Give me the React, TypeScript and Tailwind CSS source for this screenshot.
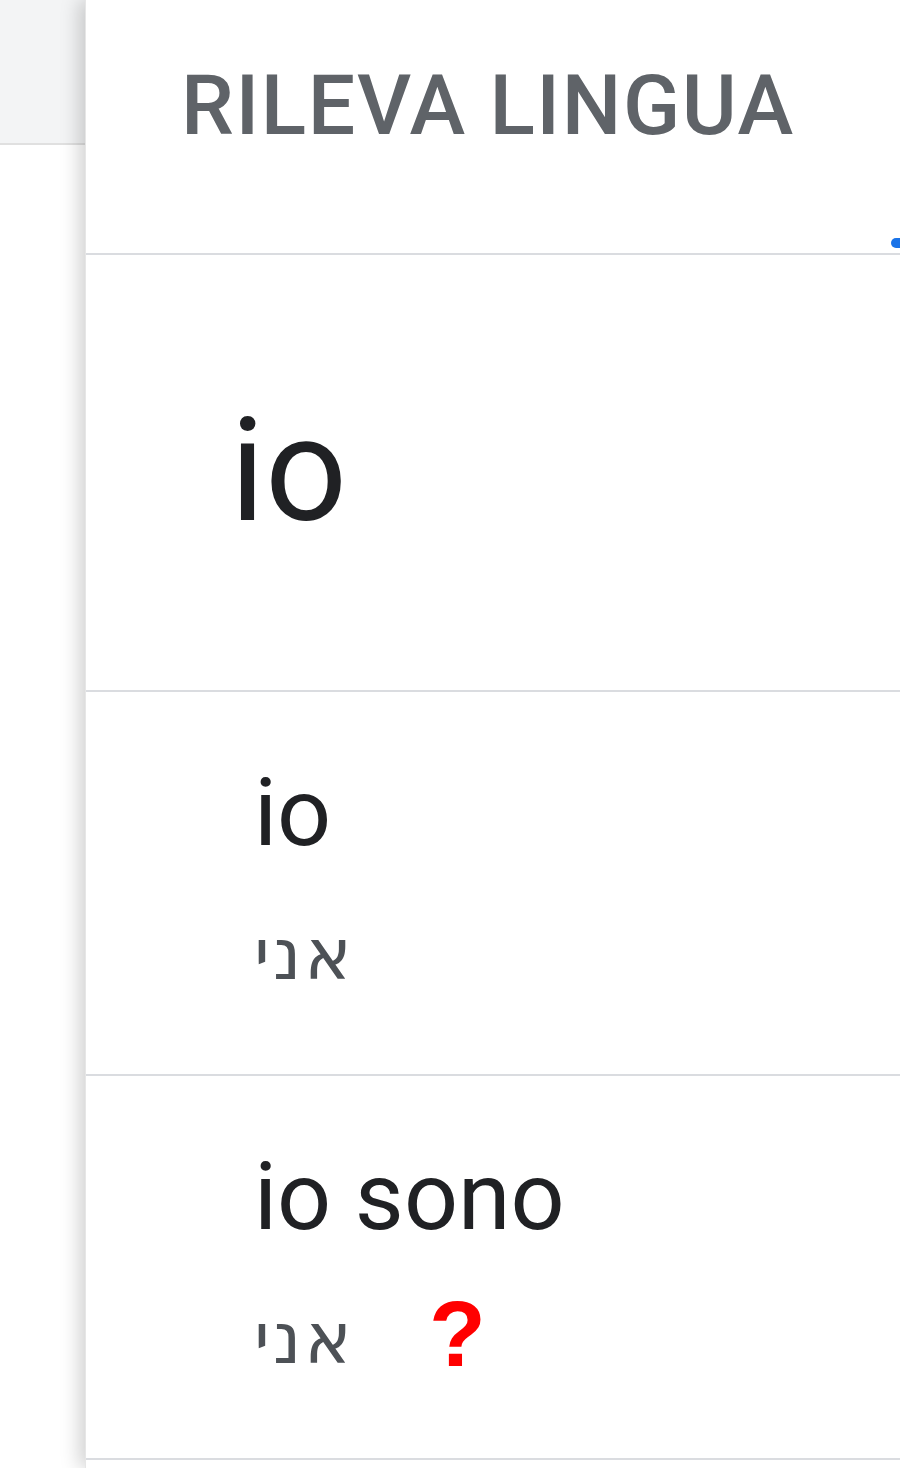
import React from "react";

const roboto = { fontFamily: "Roboto, 'Liberation Sans', Arial, sans-serif" };
const arial = { fontFamily: "'Liberation Sans', Arial, sans-serif" };
const hebrew = { fontFamily: "'DejaVu Sans', 'Liberation Sans', sans-serif" };

function Item({ main, showQ }: { main: string; showQ?: boolean }) {
  return (
    <div className="border-b-2 border-[#dadce0] pl-[168px] pt-[73px] pb-[85px]">
      <div className="text-[95px] leading-none text-[#202124]" style={roboto}>
        {main}
      </div>
      <div className="mt-[61px] flex items-start h-[68px] relative">
        <span
          dir="rtl"
          className="text-[71px] leading-[68px] tracking-[3px] text-[#4d5156]"
          style={hebrew}
        >
          אני
        </span>
        {showQ && (
          <span
            className="absolute left-[175px] -top-[17px] text-[93px] font-bold leading-none text-[#ff0000]"
            style={arial}
          >
            ?
          </span>
        )}
      </div>
    </div>
  );
}

export default function App() {
  return (
    <div className="w-[900px] h-[1468px] flex bg-white overflow-hidden">
      <div className="w-[85px] shrink-0 flex flex-col">
        <div className="h-[145px] bg-[#f3f4f5] border-b-2 border-[#e0e0e0]" />
        <div className="flex-1 bg-white" />
      </div>
      <div className="relative flex-1 bg-white shadow-[-6px_0_18px_rgba(0,0,0,0.18)] border-l border-[#e6e6e6]">
        <div className="h-[255px] border-b-2 border-[#dadce0] pl-[95px] pt-[64px]">
          <div
            className="text-[84px] font-medium leading-none text-[#5f6368] tracking-[1.6px]"
            style={roboto}
          >
            RILEVA LINGUA
          </div>
        </div>
        <div className="absolute left-[805px] top-[238px] w-[20px] h-[10px] rounded-l-[5px] bg-[#1a73e8]" />
        <div className="h-[437px] border-b-2 border-[#dadce0] pl-[144px] pt-[144px]">
          <div className="text-[144px] leading-none text-[#202124]" style={roboto}>
            io
          </div>
        </div>
        <Item main="io" />
        <Item main="io sono" showQ />
      </div>
    </div>
  );
}
